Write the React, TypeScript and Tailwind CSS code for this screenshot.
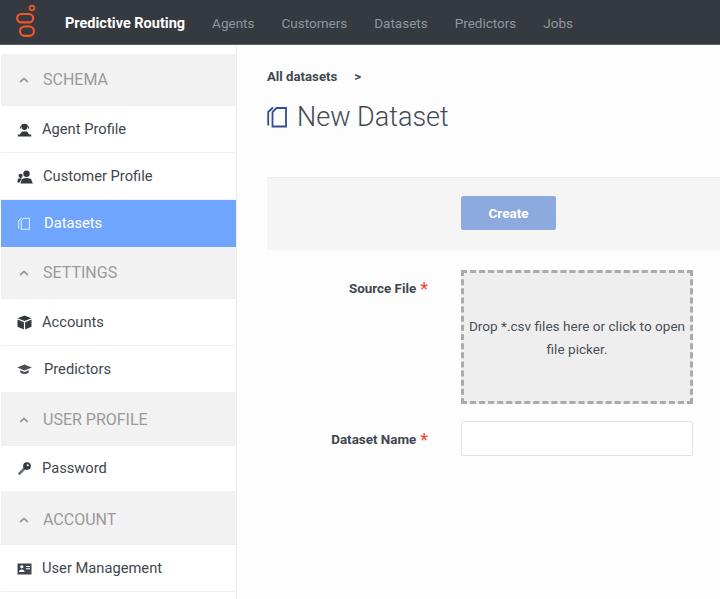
import React from "react";

const Chevron = () => (
  <svg width="12" height="8" viewBox="0 0 12 8" className="ml-[17px] mr-[13px] shrink-0">
    <path d="M2.2 6 L6 2.4 L9.8 6" fill="none" stroke="#9a9a9a" strokeWidth="1.8" />
  </svg>
);

const DocIcon = ({ color, size, sw }: { color: string; size: number; sw: number }) => (
  <svg width={size} height={size * 1.1} viewBox="0 0 20 22" fill="none" stroke={color} strokeWidth={sw}>
    <path d="M5.5 20.5 H19 V2 H9.5 L5.5 6 Z" />
    <path d="M6 1.5 L1.2 6 V19.5" />
  </svg>
);

const AgentIcon = () => (
  <svg width="15" height="15" viewBox="0 0 15 15" fill="#33393f">
    <circle cx="7.5" cy="5" r="2.9" />
    <path d="M2.9 6.4 A4.6 4.6 0 1 1 12.1 6.4 H11 A3.5 3.5 0 1 0 4 6.4 Z" />
    <path d="M5 9.6 H10 L12.2 12.4 H14.2 V14.6 H0.8 V12.4 H2.8 Z" />
  </svg>
);
const CustomerIcon = () => (
  <svg width="16" height="14" viewBox="0 0 16 14" fill="#33393f">
    <circle cx="9.5" cy="3.8" r="3.2" />
    <circle cx="3.6" cy="5.8" r="2.1" />
    <path d="M5 9 Q9.5 7 14 9 L15.8 13.6 H3.4 Z" />
    <path d="M0.2 12.4 L1 8.8 Q3 8 4.8 8.4 L2.6 12.4 Z" />
  </svg>
);
const BoxIcon = () => (
  <svg width="15" height="15" viewBox="0 0 15 15" fill="#33393f">
    <path d="M7.5 0.5 L14.5 3.2 L7.5 6 L0.5 3.2 Z" />
    <path d="M0.5 4.6 L6.9 7.2 V14.5 L0.5 11.7 Z" />
    <path d="M14.5 4.6 L8.1 7.2 V14.5 L14.5 11.7 Z" />
  </svg>
);
const CapIcon = () => (
  <svg width="15" height="11" viewBox="0 0 15 11" fill="#4a5056">
    <path d="M7.5 0.5 L14.8 3.5 L7.5 6.5 L0.2 3.5 Z" />
    <path d="M3.2 6.2 L7.5 8 L11.8 6.2 V8.6 Q7.5 11.6 3.2 8.6 Z" />
  </svg>
);
const KeyIcon = () => (
  <svg width="15" height="15" viewBox="0 0 14 14" fill="none">
    <path d="M7 7 L1.6 12.4" stroke="#6b7076" strokeWidth="2.4" />
    <circle cx="9.3" cy="4.7" r="3.6" fill="#33393f" />
    <circle cx="10" cy="4" r="1" fill="#ffffff" />
  </svg>
);
const CardIcon = () => (
  <svg width="15" height="12" viewBox="0 0 15 12" fill="#3f454c">
    <path fillRule="evenodd" d="M0.5 0.5 H14.5 V11.5 H0.5 Z M4.8 2.2 A1.6 1.6 0 1 0 4.81 2.2 Z M2 9 Q2.2 6.4 4.8 6.4 Q7.4 6.4 7.6 9 Z M9 3 V4 H13 V3 Z M9 5.2 V6.2 H13 V5.2 Z" />
  </svg>
);

const Section = ({ label, h, pad = "" }: { label: string; h: string; pad?: string }) => (
  <div className={`${h} ${pad} flex items-center bg-[#f2f2f2] border-b border-[#efefef] text-[16px] text-[#9a9a9a]`}>
    <Chevron />
    <span>{label}</span>
  </div>
);

const Item = ({
  label,
  icon,
  gap,
  active,
  h = "h-[47px] pt-[1px]",
}: {
  label: string;
  icon: React.ReactNode;
  gap: string;
  active?: boolean;
  h?: string;
}) => (
  <div
    className={`${h} flex items-center text-[14.7px] border-b ${
      active ? "bg-[#70a5fe] text-white border-[#70a5fe]" : "bg-white text-[#41474f] border-[#f0f0f0]"
    }`}
  >
    <span className={`ml-[16px] ${gap} flex items-center`}>{icon}</span>
    <span>{label}</span>
  </div>
);

export default function App() {
  return (
    <div className="w-[720px] h-[599px] overflow-hidden bg-white flex flex-col font-['Roboto',sans-serif]">
      <header className="h-[45px] shrink-0 bg-[#343a40] border-b border-[#5c6166] flex items-center">
        <svg width="20" height="35" viewBox="0 0 20 35" fill="none" stroke="#f4552a" strokeWidth="2.2" className="ml-[16px] mb-[1px]">
          <circle cx="16" cy="4" r="2.4" strokeWidth="1.6" />
          <rect x="1.2" y="10" width="16" height="8.4" rx="4.2" />
          <rect x="4" y="22.5" width="14" height="9.4" rx="4.7" />
        </svg>
        <span className="ml-[29px] pt-[3px] text-[14.5px] font-bold text-white">Predictive Routing</span>
        <nav className="ml-[27px] pt-[3px] flex gap-[27px] text-[13.5px] text-[#8f969d]">
          <span>Agents</span>
          <span>Customers</span>
          <span>Datasets</span>
          <span>Predictors</span>
          <span>Jobs</span>
        </nav>
      </header>
      <div className="flex flex-1 min-h-0">
        <aside className="w-[237px] shrink-0 border-r border-[#ececec] pl-px pt-[9px]">
          <Section label="SCHEMA" h="h-[52px]" />
          <Item label="Agent Profile" icon={<AgentIcon />} gap="mr-[10px]" />
          <Item label="Customer Profile" icon={<CustomerIcon />} gap="mr-[10px]" />
          <Item label="Datasets" icon={<span className="ml-[1px] flex"><DocIcon color="#e6efff" size={12} sw={1.7} /></span>} gap="mr-[14px]" active />
          <Section label="SETTINGS" h="h-[52px]" />
          <Item label="Accounts" icon={<BoxIcon />} gap="mr-[10px]" />
          <Item label="Predictors" icon={<CapIcon />} gap="mr-[12px]" />
          <Section label="USER PROFILE" h="h-[53px]" pad="pt-[2px]" />
          <Item label="Password" icon={<KeyIcon />} gap="mr-[10px]" h="h-[46px]" />
          <Section label="ACCOUNT" h="h-[53px]" pad="pt-[3px]" />
          <Item label="User Management" icon={<CardIcon />} gap="mr-[10px]" />
        </aside>
        <main className="flex-1 min-w-0 bg-[#fdfdfd] pl-[30px] pt-[23px] text-[#41474f]">
          <div className="flex items-center h-[18px] text-[13.2px] font-bold">
            <span>All datasets</span>
            <span className="ml-[17px]">&gt;</span>
          </div>
          <div className="mt-[9px] flex items-center h-[44px]">
            <DocIcon color="#2f4f8f" size={20} sw={1.8} />
            <h1 className="ml-[10px] text-[27px] font-light text-[#444a52]">New Dataset</h1>
          </div>
          <div className="mt-[38px] h-[73px] bg-[#f5f5f5] border-t border-[#eeeeee] pl-[194px] pt-[18px]">
            <button className="w-[95px] h-[34px] rounded-[2px] bg-[#8caade] text-white text-[13.5px] font-bold">Create</button>
          </div>
          <div className="mt-[20px] flex">
            <div className="w-[194px] shrink-0 pr-[33px] pt-[10px] flex justify-end items-start text-[13.4px] font-bold leading-[18px] text-[#41474f]">
              <span>Source File</span>
              <span className="ml-[4px] text-[#f44336] text-[18px] leading-[18px] font-normal">*</span>
            </div>
            <div className="w-[232px] h-[134px] pt-[2px] border-[3px] border-dashed border-[#ababab] bg-[#eeeeee] flex items-center justify-center text-center text-[13.6px] leading-[23px] text-[#4a5058]">
              <span>Drop *.csv files here or click to open file picker.</span>
            </div>
          </div>
          <div className="mt-[17px] flex">
            <div className="w-[194px] shrink-0 pr-[33px] pt-[10px] flex justify-end items-start text-[13.4px] font-bold leading-[18px] text-[#41474f]">
              <span>Dataset Name</span>
              <span className="ml-[4px] text-[#f44336] text-[18px] leading-[18px] font-normal">*</span>
            </div>
            <input className="w-[232px] h-[35px] border border-[#dde3ea] rounded-[2px] bg-white" />
          </div>
        </main>
      </div>
    </div>
  );
}
